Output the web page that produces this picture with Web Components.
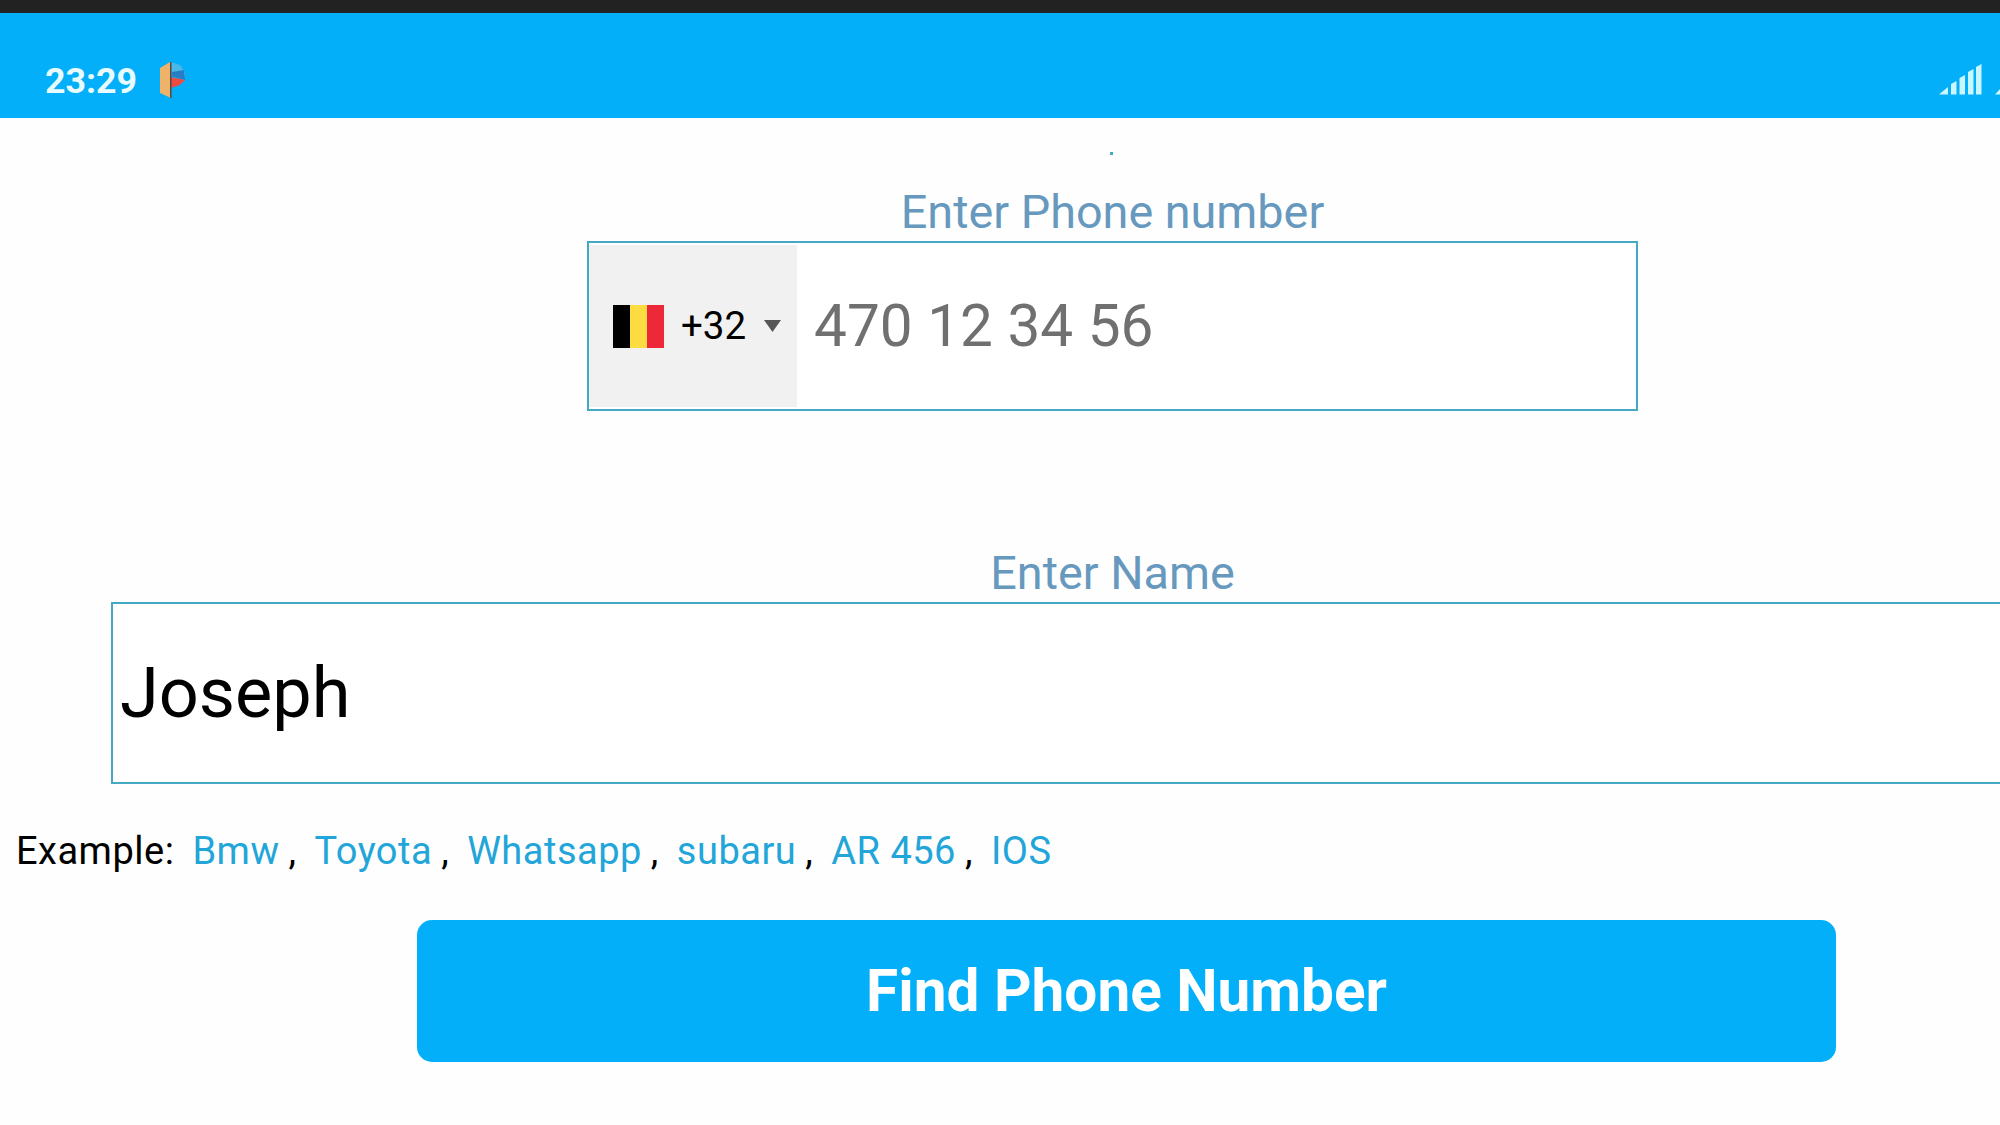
<!DOCTYPE html>
<html lang="en">
<head>
<meta charset="utf-8">
<title>Find Phone Number</title>
<style>
html, body {
    margin: 0;
    height: 100%;
    overflow: hidden;
    background: #fefefe;
    font-family: Roboto, "Liberation Sans", sans-serif;
}
</style>
</head>
<body>
<finder-app>
  <status-bar slot="status" time="23:29"></status-bar>
  <labelled-field class="phone" label="Enter Phone number">
    <phone-input code="+32" placeholder="470 12 34 56"></phone-input>
  </labelled-field>
  <labelled-field class="name" label="Enter Name">
    <name-input value="Joseph"></name-input>
  </labelled-field>
  <example-list items="Bmw|Toyota|Whatsapp|subaru|AR 456|IOS">Example:</example-list>
  <find-button>Find Phone Number</find-button>
</finder-app>

<template id="finder-app">
<style>
:host {
    display: flex;
    flex-direction: column;
    height: 1125px;
    overflow: hidden;
    --accent: #02aff8;
    --line: #45a9c4;
    --label: #6699bd;
    --link: #22a5d8;
}
main {
    display: flex;
    flex-direction: column;
    width: 2225px;
}
.dot {
    align-self: center;
    width: 3px;
    height: 3px;
    margin: 34px 3px 0 0;
    background: var(--line);
}
::slotted(.phone) { margin-top: 30px; }
::slotted(.name) { margin-top: 135px; }
</style>
<slot name="status"></slot>
<main>
  <div class="dot"></div>
  <slot></slot>
</main>
</template>

<template id="status-bar">
<style>
:host {
    display: flex;
    align-items: center;
    box-sizing: border-box;
    flex: none;
    width: 2000px;
    height: 118px;
    padding: 30px 0 0 45px;
    border-top: 13px solid #222;
    background: var(--accent);
    color: #e8fcff;
    overflow: hidden;
}
time {
    width: 92px;
    font-size: 35.750px;
    font-weight: 700;
    line-height: 40px;
    white-space: nowrap;
}
.app { margin: 0 0 2px 21px; flex: none; }
.signal { margin-left: auto; flex: none; }
</style>
<time></time>
<svg class="app" width="32" height="40" viewBox="0 0 32 40">
  <path d="M13 2 L22 5 L27 12 L27 17 L13 15Z" fill="#49b8e6"/>
  <path d="M14 12 L26 10 L27 20 L14 16Z" fill="#267fc4"/>
  <path d="M13 17 L27 20 L22 25 L13 28Z" fill="#ee4b42"/>
  <path d="M2 8 L12 2 L13 38 L2 33Z" fill="#eeb368"/>
  <path d="M12 2 L13.500 2 L13.500 39 L12 37Z" fill="#4f4b4b"/>
</svg>
<svg class="signal" width="61" height="36" viewBox="0 0 61 36" fill="#c9f6ff">
  <path d="M0.500 31 L9 24 V31.500 H0.500Z"/>
  <path d="M12 21 L17.500 18 V31.500 H12Z"/>
  <path d="M20.500 15 L26 12 V31.500 H20.500Z"/>
  <path d="M29 9 L34.500 6 V31.500 H29Z"/>
  <path d="M37 4 L42.500 1 V31.500 H37Z"/>
  <path d="M56 31.500 L61 26 V31.500Z"/>
</svg>
</template>

<template id="labelled-field">
<style>
:host {
    display: flex;
    flex-direction: column;
    align-items: center;
}
label {
    height: 56px;
    font-size: 46.750px;
    line-height: 54px;
    color: var(--label);
    white-space: nowrap;
}
</style>
<label></label>
<slot></slot>
</template>

<template id="phone-input">
<style>
:host {
    display: flex;
    box-sizing: border-box;
    width: 1051px;
    height: 170px;
    border: 2px solid var(--line);
    background: #fff;
}
.country {
    display: flex;
    align-items: center;
    box-sizing: border-box;
    width: 208px;
    margin: 2px 0;
    padding-left: 24px;
    background: #f1f1f1;
    color: #000;
}
.country svg { flex: none; }
.code {
    width: 66px;
    margin: 0 17px 0 17px;
    font-size: 38.500px;
    line-height: 44px;
}
.number {
    margin-left: 17px;
    font-size: 58.500px;
    line-height: 166px;
    color: #707070;
    white-space: nowrap;
}
</style>
<div class="country">
  <svg width="51" height="43" viewBox="0 0 51 43">
    <path d="M0 0H17V43H0Z" fill="#000"/>
    <path d="M17 0H34V43H17Z" fill="#fddc42"/>
    <path d="M34 0H51V43H34Z" fill="#ed2939"/>
  </svg>
  <span class="code"></span>
  <svg width="17" height="12" viewBox="0 0 17 12"><path d="M0 0H17L8.500 12Z" fill="#555"/></svg>
</div>
<span class="number"></span>
</template>

<template id="name-input">
<style>
:host {
    display: block;
    box-sizing: border-box;
    width: 2003px;
    height: 182px;
    padding-left: 7px;
    border: 2px solid var(--line);
    background: #fff;
    color: #000;
    font-size: 70.250px;
    line-height: 178px;
}
</style>
<span class="value"></span>
</template>

<template id="example-list">
<style>
:host {
    display: flex;
    margin-top: 43px;
    padding-left: 16px;
    font-size: 38px;
    letter-spacing: 0.500px;
    line-height: 48px;
    color: #000;
    white-space: pre;
}
.items { display: flex; margin-left: 18px; }
a { color: var(--link); }
.comma {
    box-sizing: border-box;
    width: 27px;
    margin-right: 8px;
    padding-left: 9px;
}
</style>
<slot></slot>
<div class="items"></div>
</template>

<template id="find-button">
<style>
:host {
    display: block;
    width: 1419px;
    margin: 45px 0 0 417px;
}
button {
    display: block;
    width: 100%;
    height: 142px;
    padding: 0;
    border: 0;
    border-radius: 15px;
    background: var(--accent);
    color: #fff;
    font: 700 58.500px/140px Roboto, "Liberation Sans", sans-serif;
}
</style>
<button><slot></slot></button>
</template>

<script>
"use strict";

/* Clones the template named after the tag into an open shadow root. */
class BaseElement extends HTMLElement {
    constructor () {
        super();
        let tpl = document.getElementById(this.localName);
        this.attachShadow({mode: 'open'});
        this.shadowRoot.appendChild(tpl.content.cloneNode(true));
    }

    fill(selector, attr) {
        this.shadowRoot.querySelector(selector).textContent = this.getAttribute(attr);
    }
}

class FinderApp extends BaseElement {}

class FindButton extends BaseElement {}

class StatusBar extends BaseElement {
    connectedCallback() {
        this.fill('time', 'time');
    }
}

class LabelledField extends BaseElement {
    connectedCallback() {
        this.fill('label', 'label');
    }
}

class PhoneInput extends BaseElement {
    connectedCallback() {
        this.fill('.code', 'code');
        this.fill('.number', 'placeholder');
    }
}

class NameInput extends BaseElement {
    connectedCallback() {
        this.fill('.value', 'value');
    }
}

class ExampleList extends BaseElement {
    connectedCallback() {
        let box = this.shadowRoot.querySelector('.items'),
            items = this.getAttribute('items').split('|');
        box.replaceChildren();
        items.forEach((item, i) => {
            let link = document.createElement('a');
            link.textContent = item;
            box.appendChild(link);
            if (i < items.length - 1) {
                let comma = document.createElement('span');
                comma.className = 'comma';
                comma.textContent = ',';
                box.appendChild(comma);
            }
        });
    }
}

window.customElements.define('finder-app', FinderApp);
window.customElements.define('status-bar', StatusBar);
window.customElements.define('labelled-field', LabelledField);
window.customElements.define('phone-input', PhoneInput);
window.customElements.define('name-input', NameInput);
window.customElements.define('example-list', ExampleList);
window.customElements.define('find-button', FindButton);
</script>
</body>
</html>
